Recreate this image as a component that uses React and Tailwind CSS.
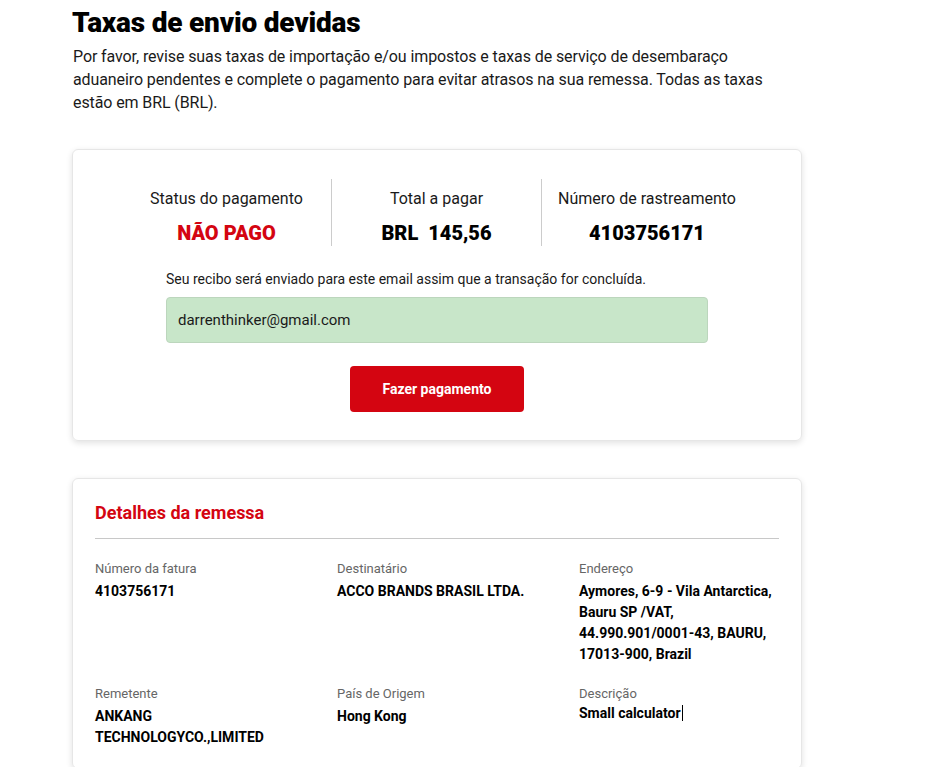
const font = { fontFamily: 'Roboto, "Liberation Sans", sans-serif' };

function Stat({ label, value, red, last }) {
  return (
    <div className={`flex flex-col items-center gap-[9px] pt-[8px] pb-[0px] ${last ? '' : 'border-r border-[#cccccc]'}`}>
      <span className="text-[16px] leading-[24px] text-[#1a1a1a]">{label}</span>
      <span className={`whitespace-pre text-[20px] leading-[26px] font-black ${red ? 'text-[#d40511]' : 'text-black'}`}>{value}</span>
    </div>
  );
}

function Detail({ label, tight, children }) {
  return (
    <div className="flex flex-col">
      <span className="text-[13px] leading-[18px] text-[#666666]">{label}</span>
      <div className={`${tight ? 'mt-0' : 'mt-[3px]'} text-[14px] leading-[21px] font-bold text-black`}>{children}</div>
    </div>
  );
}

export default function App() {
  return (
    <div className="min-h-screen bg-white" style={font}>
      <div className="w-[730px] ml-[72px]">
        <h1 className="pt-[6px] text-[28px] leading-[34px] font-black text-black tracking-[-0.2px]">Taxas de envio devidas</h1>
        <p className="mt-[5px] pl-[1px] text-[16px] leading-[23px] tracking-[-0.1px] text-[#1a1a1a] w-[700px]">
          Por favor, revise suas taxas de importação e/ou impostos e taxas de serviço de desembaraço aduaneiro pendentes e complete o pagamento para evitar atrasos na sua remessa. Todas as taxas estão em BRL (BRL).
        </p>

        <section className="mt-[35px] rounded-[6px] border border-[#e6e6e6] shadow-[0_2px_6px_rgba(0,0,0,0.12)] pt-[29px] pb-[28px]">
          <div className="mx-auto w-[630px] grid grid-cols-3">
            <Stat label="Status do pagamento" value="NÃO PAGO" red />
            <Stat label="Total a pagar" value="BRL  145,56" />
            <Stat label="Número de rastreamento" value="4103756171" last />
          </div>
          <div className="mx-auto w-[542px] mt-[23px]">
            <p className="text-[14px] leading-[20px] text-[#1a1a1a]">Seu recibo será enviado para este email assim que a transação for concluída.</p>
            <div className="mt-[8px] h-[46px] rounded-[4px] bg-[#c8e6c9] border border-[#bcd6bd] flex items-center px-[11px] text-[15px] text-[#1a1a1a]">
              darrenthinker@gmail.com
            </div>
            <div className="mt-[23px] flex justify-center">
              <button className="w-[174px] h-[46px] rounded-[4px] bg-[#d40511] text-white text-[14px] font-bold">Fazer pagamento</button>
            </div>
          </div>
        </section>

        <section className="mt-[37px] rounded-[6px] border border-[#e6e6e6] shadow-[0_2px_6px_rgba(0,0,0,0.12)] px-[22px] pt-[21px] pb-[20px]">
          <h2 className="text-[18px] leading-[26px] font-bold text-[#d40511]">Detalhes da remessa</h2>
          <div className="mt-[12px] border-t border-[#c8c8c8]" />
          <div className="mt-[21px] grid grid-cols-[200px_200px_200px] gap-x-[42px] gap-y-[20px]">
            <Detail label="Número da fatura">4103756171</Detail>
            <Detail label="Destinatário">ACCO BRANDS BRASIL LTDA.</Detail>
            <Detail label="Endereço">Aymores, 6-9 - Vila Antarctica, Bauru SP /VAT, 44.990.901/0001-43, BAURU, 17013-900, Brazil</Detail>
            <Detail label="Remetente">ANKANG TECHNOLOGYCO.,LIMITED</Detail>
            <Detail label="País de Origem">Hong Kong</Detail>
            <Detail label="Descrição" tight>
              <span className="border-r border-black pr-[1px]">Small calculator</span>
            </Detail>
          </div>
        </section>
      </div>
    </div>
  );
}
